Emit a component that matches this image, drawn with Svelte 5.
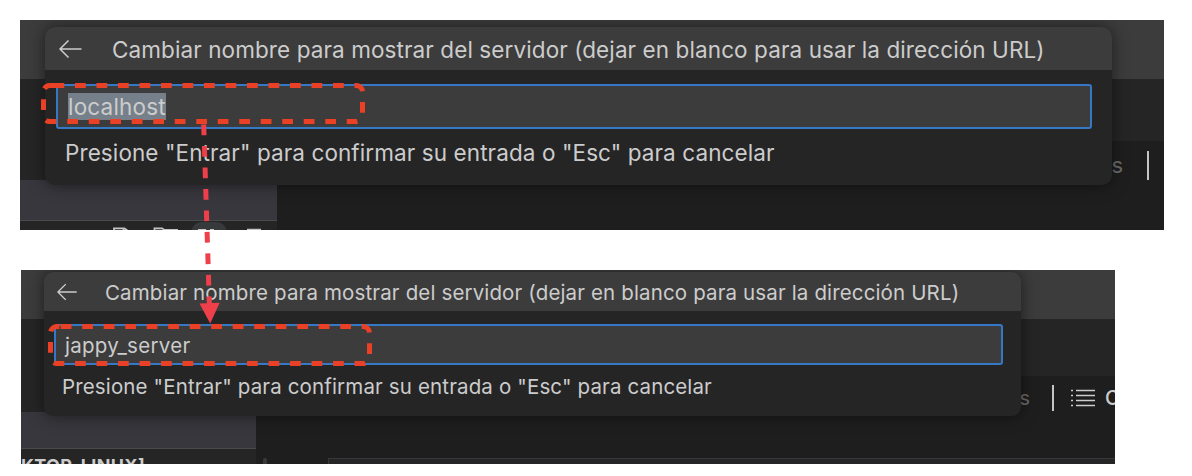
<script>
  const title = 'Cambiar nombre para mostrar del servidor (dejar en blanco para usar la dirección URL)';
  const hint = 'Presione "Entrar" para confirmar su entrada o "Esc" para cancelar';
</script>

<main>
  <section class="shot first">
    <div class="titlebar"></div>
    <div class="body">
      <div class="side">
        <div class="band"></div>
        <div class="row"></div>
        <div class="tools">
          <svg width="256" height="9" viewBox="20 221 256 9" fill="none" stroke="#c5c5c5" stroke-width="1.8">
            <rect x="191" y="222" width="36" height="26" rx="11" fill="#37393a" stroke="none" />
            <path d="M114 231V228.300H124.500L128 231M123.500 228V231M154.500 231V228.300H162L164.500 230H178M198 229.800H206M210 230H214M247 229.600H261" />
          </svg>
        </div>
      </div>
      <div class="main">
        <div class="tabs"></div>
        <div class="actions"><span class="dim">s</span><i></i></div>
      </div>
    </div>
    <div class="dialog">
      <header>
        <svg class="back" width="24" height="20" viewBox="0 0 24 20" fill="none" stroke="#cccccc" stroke-width="1.5"><path d="M10.500 1.500L2 10L10.500 18.500M2 10H23.500" /></svg>
        <span class="title">{title}</span>
      </header>
      <div class="field"><mark>localhost</mark></div>
      <p>{hint}</p>
    </div>
  </section>

  <section class="shot second">
    <div class="titlebar"></div>
    <div class="body">
      <div class="side">
        <div class="band"></div>
        <div class="row"></div>
        <div class="tools"><b>KTOP-LINUX]</b></div>
      </div>
      <div class="main">
        <div class="tabs"></div>
        <div class="actions">
          <span class="dim">s</span><i></i>
          <svg class="list" width="24" height="18" viewBox="0 0 24 18" stroke="#cccccc" stroke-width="1.5"><path d="M0 1.500H2M5 1.500H24M0 6.500H2M5 6.500H24M0 11.500H2M5 11.500H24M0 16.500H2M5 16.500H24" /></svg>
          <span class="more">C</span>
        </div>
        <div class="bottom"><span class="thumb"></span><div class="cell"></div></div>
      </div>
    </div>
    <div class="dialog">
      <header>
        <svg class="back" width="21" height="18" viewBox="0 0 24 20" fill="none" stroke="#cccccc" stroke-width="1.600"><path d="M10 1L1 10L10 19M1 10H22.500" /></svg>
        <span class="title">{title}</span>
      </header>
      <div class="field"><span>jappy_server</span></div>
      <p>{hint}</p>
    </div>
  </section>

  <svg class="notes" width="1192" height="476" viewBox="0 0 1192 476" fill="none">
    <g stroke="#ea4025" stroke-width="5" stroke-dasharray="10.75 10.75">
      <path d="M53.500 85.500H356.100A6.400 6.400 0 0 1 362.500 91.900V115.100A6.400 6.400 0 0 1 356.100 121.500H49.900A6.400 6.400 0 0 1 43.500 115.100V91.900A6.400 6.400 0 0 1 49.900 85.500H53.500" />
      <path d="M60.700 326.500H363.100A6.400 6.400 0 0 1 369.500 332.900V357.100A6.400 6.400 0 0 1 363.100 363.500H56.900A6.400 6.400 0 0 1 50.500 357.100V332.900A6.400 6.400 0 0 1 56.900 326.500H60.700" />
    </g>
    <path d="M203.700 124.500L209.400 305" stroke="#ed404b" stroke-width="5" stroke-dasharray="10.750 10.750" />
    <path d="M199.500 303.500L219.700 302.800L210.200 323.500Z" fill="#ed404b" />
  </svg>
</main>

<style>
  :global(body) { margin: 0; background: #fff; }
  main {
    position: relative; width: 1192px; height: 476px; box-sizing: border-box; overflow: hidden;
    padding: 20px 0 0 20px; display: flex; flex-direction: column; gap: 40px;
    font-family: Inter, "Liberation Sans", sans-serif; color: #ccc; background: #fff;
  }
  .shot { position: relative; overflow: hidden; display: flex; flex-direction: column; background: #1e1e1e; flex: none; }
  .first { width: 1144px; height: 210px; }
  .second { width: 1094px; height: 194px; margin-left: 1px; }
  .titlebar { background: #3c3c3c; height: 59px; flex: none; }
  .second .titlebar { height: 49px; }
  .body { display: flex; flex: 1; min-height: 0; }
  .side { width: 257px; display: flex; flex-direction: column; background: #252526; flex: none; }
  .second .side { width: 235px; }
  .band { height: 101px; flex: none; }
  .second .band { height: 93px; }
  .row { height: 40px; background: #37373d; border-bottom: 1px solid #4b4b4c; flex: none; }
  .second .row { height: 36px; }
  .tools { flex: 1; overflow: hidden; }
  .tools svg { display: block; }
  .tools b { display: block; font-size: 18px; letter-spacing: .35px; line-height: 20px; margin-top: 7px; white-space: nowrap; }
  .main { flex: 1; display: flex; flex-direction: column; min-width: 0; }
  .tabs { height: 62px; background: #252526; flex: none; }
  .second .tabs { height: 57px; }
  .actions { display: flex; align-items: center; justify-content: flex-end; height: 48px; padding-right: 15px; font-size: 22px; flex: none; }
  .actions i { width: 2px; height: 29px; background: #c5c5c5; margin-left: 24px; }
  .dim { color: #6c6c6c; }
  .second .actions { height: 44px; padding: 0; font-size: 20px; overflow: hidden; }
  .second .actions i { height: 26px; width: 2px; margin-left: 22px; }
  .list { margin-left: 17px; flex: none; }
  .more { width: 10px; margin-left: 10px; font-weight: 500; }
  .bottom { display: flex; flex: 1; padding-left: 7px; }
  .thumb { width: 4px; margin-top: 38px; border-radius: 2px 2px 0 0; background: #39393d; }
  .cell { margin: 38px 0 0 61px; flex: 1; background: #252526; border: solid #37373d; border-width: 1px 0 0 1px; }

  .dialog {
    position: absolute; left: 25px; top: 7px; width: 1067px; height: 158px; border-radius: 10px;
    background: #252526; box-shadow: 0 0 16px rgba(0, 0, 0, .5); overflow: hidden; box-sizing: border-box;
    font-size: 22.5px; letter-spacing: .095px;
  }
  header { height: 43px; background: #3c3c3c; display: flex; align-items: center; }
  .back { margin-left: 13px; width: 24px; flex: none; }
  .title { margin-left: 30px; padding-top: 2px; white-space: nowrap; }
  .field {
    margin: 14px 20px 0 11px; height: 45px; box-sizing: border-box; border: 2px solid #3578c6; border-radius: 3px;
    background: #3c3c3c; display: flex; align-items: center; padding-left: 10px;
  }
  mark { background: #76808a; color: #ccc; line-height: 27px; height: 27px; letter-spacing: .2px; }
  p { margin: 10px 0 0 20px; line-height: 28px; white-space: nowrap; }
  .second .dialog { left: 23px; top: 2px; width: 977px; height: 144px; border-radius: 9px; font-size: 20.5px; letter-spacing: .14px; }
  .second header { height: 39px; }
  .second .back { width: 21px; }
  .second .title { margin-left: 27px; }
  .second .field { height: 41px; margin: 13px 18px 0 10px; padding-left: 9px; letter-spacing: .28px; }
  .second .field span { padding-top: 2px; }
  .second p { margin: 9px 0 0 18px; line-height: 26px; }
  .notes { position: absolute; left: 0; top: 0; pointer-events: none; }
</style>
